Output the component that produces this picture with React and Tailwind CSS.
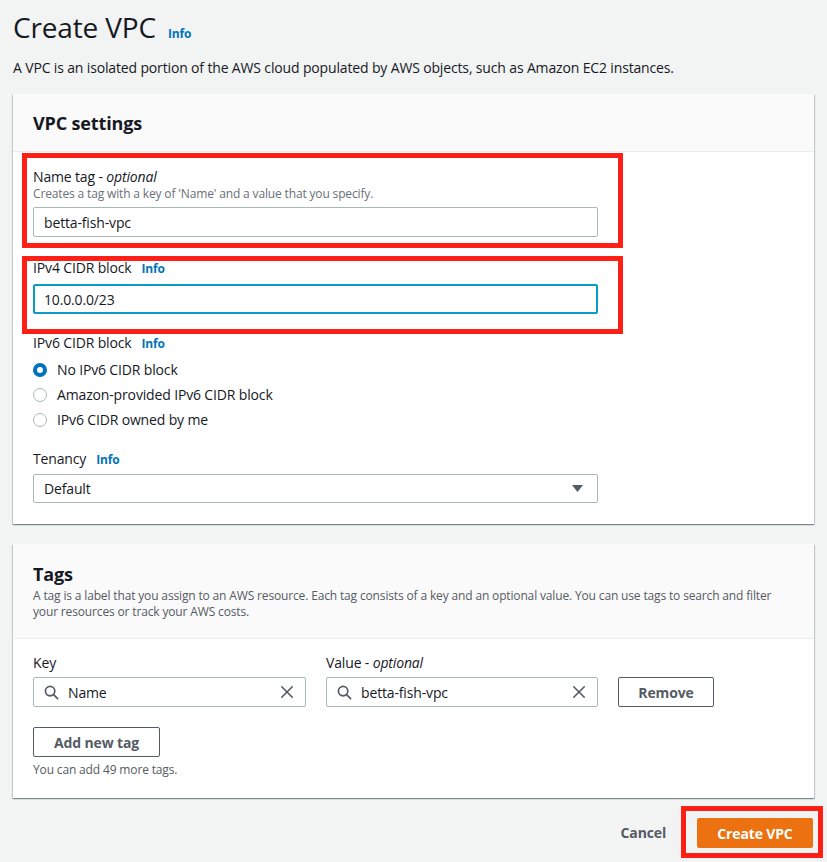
import React from "react";

function Info() {
  return <span className="ml-[10px] text-[12px] font-bold text-[#0073bb]">Info</span>;
}

function SearchIcon() {
  return (
    <svg width="15" height="15" viewBox="0 0 16 16" fill="none" stroke="#545b64" strokeWidth="1.8" strokeLinecap="round">
      <circle cx="6.5" cy="6.5" r="5" />
      <line x1="10.2" y1="10.2" x2="14.5" y2="14.5" />
    </svg>
  );
}

function XIcon() {
  return (
    <svg width="14" height="14" viewBox="0 0 16 16" fill="none" stroke="#545b64" strokeWidth="1.8" strokeLinecap="round">
      <line x1="2" y1="2" x2="14" y2="14" />
      <line x1="14" y1="2" x2="2" y2="14" />
    </svg>
  );
}

function Radio({ checked, label }) {
  return (
    <div className="flex h-[25px] items-center">
      {checked ? (
        <span className="h-[14px] w-[14px] rounded-full border-[4px] border-[#0073bb] bg-white" />
      ) : (
        <span className="h-[14px] w-[14px] rounded-full border-[1.5px] border-[#aab7b8] bg-white" />
      )}
      <span className="ml-[10px] text-[14px] leading-[20px]">{label}</span>
    </div>
  );
}

const panel =
  "bg-white shadow-[0_1px_1px_0_rgba(0,28,36,0.3),1px_1px_1px_0_rgba(0,28,36,0.15),-1px_1px_1px_0_rgba(0,28,36,0.15)]";

export default function App() {
  return (
    <div className="min-h-[862px] bg-[#f2f3f3] px-[13px] pt-[9px] font-['Open_Sans',sans-serif] tracking-[-0.15px] text-[#16191f]">
      <div className="flex items-baseline">
        <h1 className="text-[28px] leading-[36px] font-normal">Create VPC</h1>
        <span className="ml-[12px] text-[12px] font-bold text-[#0073bb]">Info</span>
      </div>
      <p className="mt-[13px] text-[14px] leading-[20px]">
        A VPC is an isolated portion of the AWS cloud populated by AWS objects, such as Amazon EC2 instances.
      </p>

      <div className={"mt-4 " + panel}>
        <div className="flex h-[58px] items-center border-b border-[#eaeded] bg-[#fafafa] px-5">
          <h2 className="text-[18px] font-bold leading-[22px]">VPC settings</h2>
        </div>
        <div className="px-5 pb-[21px]">
          <div className="-ml-[11px] mt-px w-[601px] border-[5px] border-[#fe2016] pl-[6px] pt-[9px] pb-[6px]">
            <div className="text-[14px] leading-[20px]">
              Name tag - <i>optional</i>
            </div>
            <div className="-mt-px text-[12px] leading-[16px] text-[#687078]">
              Creates a tag with a key of 'Name' and a value that you specify.
            </div>
            <div className="mt-[5px] flex h-[30px] w-[565px] items-center rounded-[2px] border border-[#aab7b8] pl-[10px] text-[14px]">
              betta-fish-vpc
            </div>
          </div>

          <div className="-ml-[11px] mt-2 w-[601px] border-[5px] border-[#fe2016] pl-[6px] pb-[15px]">
            <div className="text-[14px] leading-[14px]">
              IPv4 CIDR block<Info />
            </div>
            <div className="mt-2 flex h-[30px] w-[565px] items-center rounded-[2px] border-2 border-[#0a9bc6] pl-[9px] text-[14px]">
              10.0.0.0/23
            </div>
          </div>

          <div className="-mt-px text-[14px] leading-[20px]">
            IPv6 CIDR block<Info />
          </div>
          <div className="mt-[3px]">
            <Radio checked label="No IPv6 CIDR block" />
            <Radio label="Amazon-provided IPv6 CIDR block" />
            <Radio label="IPv6 CIDR owned by me" />
          </div>

          <div className="mt-[17px] text-[14px] leading-[20px]">
            Tenancy<Info />
          </div>
          <div className="mt-[4px] flex h-[29px] w-[565px] items-center justify-between rounded-[2px] border border-[#aab7b8] pl-[10px] pr-[14px] text-[14px]">
            <span>Default</span>
            <svg width="11" height="8" viewBox="0 0 11 8">
              <path d="M0 0 H11 L5.5 7 Z" fill="#545b64" />
            </svg>
          </div>
        </div>
      </div>

      <div className={"mt-5 " + panel}>
        <div className="border-b border-[#eaeded] bg-[#fafafa] px-5 pt-[19px] pb-[18px]">
          <h2 className="text-[18px] font-bold leading-[22px]">Tags</h2>
          <p className="mt-[3px] text-[12px] leading-[16px] text-[#545b64]">
            A tag is a label that you assign to an AWS resource. Each tag consists of a key and an optional value. You can use tags to search and filter your resources or track your AWS costs.
          </p>
        </div>
        <div className="px-5 pt-[14px] pb-5">
          <div className="flex items-end gap-5">
            <div className="w-[273px]">
              <div className="text-[14px] leading-[20px]">Key</div>
              <div className="mt-[4px] flex h-[30px] items-center rounded-[2px] border border-[#aab7b8] pl-[10px] pr-[11px] text-[14px]">
                <SearchIcon />
                <span className="ml-[9px] flex-1">Name</span>
                <XIcon />
              </div>
            </div>
            <div className="w-[272px]">
              <div className="text-[14px] leading-[20px]">
                Value - <i>optional</i>
              </div>
              <div className="mt-[4px] flex h-[30px] items-center rounded-[2px] border border-[#aab7b8] pl-[10px] pr-[11px] text-[14px]">
                <SearchIcon />
                <span className="ml-[9px] flex-1">betta-fish-vpc</span>
                <XIcon />
              </div>
            </div>
            <button className="flex h-[30px] w-[96px] items-center justify-center rounded-[2px] border border-[#545b64] bg-white text-[14px] font-bold text-[#545b64]">
              Remove
            </button>
          </div>
          <button className="mt-5 flex h-[30px] w-[127px] items-center justify-center rounded-[2px] border border-[#545b64] bg-white text-[14px] font-bold text-[#545b64]">
            Add new tag
          </button>
          <div className="mt-[5px] text-[12px] leading-[16px] text-[#545b64]">You can add 49 more tags.</div>
        </div>
      </div>

      <div className="mt-2 flex items-center justify-end">
        <span className="mr-[15px] text-[14px] font-bold text-[#545b64]">Cancel</span>
        <div className="-mr-[9px] border-[5px] border-[#fe2016] pt-[7px] pr-[5px] pb-[5px] pl-[11px]">
          <button className="flex h-[30px] w-[116px] items-center justify-center rounded-[2px] bg-[#ec7211] text-[14px] font-bold text-white">
            Create VPC
          </button>
        </div>
      </div>
    </div>
  );
}
